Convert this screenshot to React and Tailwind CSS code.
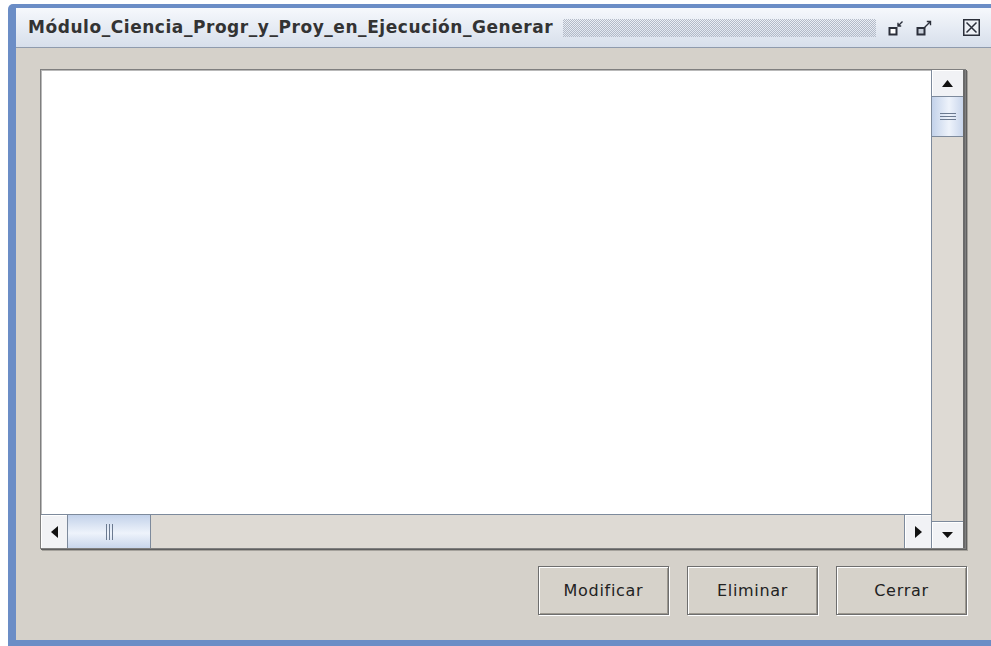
import React from "react";

const dialogFont = { fontFamily: '"DejaVu Sans", "Liberation Sans", sans-serif' };

function TriUp() {
  return (
    <svg width="11" height="7" viewBox="0 0 11 7"><polygon points="0,7 5.5,0 11,7" fill="#111" /></svg>
  );
}
function TriDown() {
  return (
    <svg width="11" height="6" viewBox="0 0 11 6"><polygon points="0,0 11,0 5.5,6" fill="#111" /></svg>
  );
}
function TriLeft() {
  return (
    <svg width="7" height="12" viewBox="0 0 7 12"><polygon points="7,0 7,12 0,6" fill="#111" /></svg>
  );
}
function TriRight() {
  return (
    <svg width="7" height="12" viewBox="0 0 7 12"><polygon points="0,0 7,6 0,12" fill="#111" /></svg>
  );
}

function IconifyIcon() {
  return (
    <svg width="16" height="16" viewBox="0 0 16 16">
      <rect x="1.5" y="8" width="7" height="6.5" fill="#fff" stroke="#2b2f3a" strokeWidth="2" />
      <path d="M14.5 1.5 L10 6 M10 2.8 V6 H13.2" stroke="#2b2f3a" strokeWidth="1.4" fill="none" />
    </svg>
  );
}
function MaximizeIcon() {
  return (
    <svg width="16" height="16" viewBox="0 0 16 16">
      <rect x="1.5" y="8" width="7" height="6.5" fill="#c8cfda" stroke="#2b2f3a" strokeWidth="2" />
      <path d="M8.5 7.5 L14.5 1.5 M10.8 1.5 H14.5 V5.2" stroke="#2b2f3a" strokeWidth="1.4" fill="none" />
    </svg>
  );
}
function CloseIcon() {
  return (
    <svg width="17" height="17" viewBox="0 0 17 17">
      <rect x="0.75" y="0.75" width="15.5" height="15.5" fill="#eef1f6" stroke="#2b2f3a" strokeWidth="1.5" />
      <path d="M3.5 3.5 L13.5 13.5 M13.5 3.5 L3.5 13.5" stroke="#2b2f3a" strokeWidth="1.5" />
    </svg>
  );
}

function ArrowButton({ children, className }) {
  return (
    <div
      className={
        "flex items-center justify-center bg-[#f1f2f5] border border-[#7d8a9c] shadow-[inset_1px_1px_0_#ffffff] " +
        className
      }
    >
      {children}
    </div>
  );
}

function PushButton({ label }) {
  return (
    <div className="w-[131px] h-[49px] flex items-center justify-center bg-[#d6d2ca] border border-[#6e6e6e] shadow-[inset_1px_1px_0_#ffffff,inset_-1px_-1px_0_#9c988f,1px_1px_0_#ffffff] text-[16px] tracking-[0.7px] text-[#222]">
      {label}
    </div>
  );
}

export default function App() {
  return (
    <div className="w-[991px] h-[646px] bg-white overflow-hidden" style={dialogFont}>
      <div className="ml-[8px] mt-[4px] w-[983px] h-[642px] bg-[#6b8dc6] rounded-tl-[5px] pl-[8px] pt-[4px] pb-[6px] flex flex-col">
        {/* title bar */}
        <div className="h-[40px] shrink-0 flex items-center bg-[linear-gradient(#f6f8fc,#e3e9f2_60%,#d7dfeb)] border-b border-[#8f9bad] pl-[12px] pr-[10px]">
          <span className="text-[17px] font-bold text-[#333] tracking-[0.55px] whitespace-nowrap">
            Módulo_Ciencia_Progr_y_Proy_en_Ejecución_Generar
          </span>
          <div className="flex-1 h-[18px] ml-[10px] mr-[12px] bg-[conic-gradient(#b3bac7_25%,transparent_0_50%,#b3bac7_0_75%,transparent_0)] bg-[length:2px_2px]" />
          <div className="flex items-center gap-[12px] pr-[1px]">
            <IconifyIcon />
            <MaximizeIcon />
            <div className="ml-[19px]">
              <CloseIcon />
            </div>
          </div>
        </div>

        {/* content */}
        <div className="flex-1 bg-[#d5d1ca] pl-[24px] pr-[24px] pt-[21px] flex flex-col">
          <div className="w-[926px] h-[480px] border border-[#7f7f7f] shadow-[1px_1px_0_#5f5f5f,2px_2px_0_#a5a29c] bg-[#d5d1ca] grid grid-cols-[890px_1fr] grid-rows-[444px_1fr]">
            <div className="bg-white border-l border-t border-[#b9b9b9]" />
            {/* vertical scrollbar */}
            <div className="row-span-2 flex flex-col bg-[#dedad4] border-l border-[#7d8a9c] border-r-2 border-r-[#6a6a6a]">
              <ArrowButton className="h-[27px] border-x-0 border-t-0">
                <TriUp />
              </ArrowButton>
              <div className="h-[40px] flex flex-col items-center justify-center gap-[2px] bg-[linear-gradient(90deg,#c3d2ea,#eef3fb_55%,#c9d6ec)] border-b border-[#7d8a9c]">
                <div className="w-[16px] h-[1px] bg-[#6b7a90]" />
                <div className="w-[16px] h-[1px] bg-[#6b7a90]" />
                <div className="w-[16px] h-[1px] bg-[#6b7a90]" />
              </div>
              <div className="flex-1" />
              <ArrowButton className="h-[27px] border-x-0 border-b-0">
                <TriDown />
              </ArrowButton>
            </div>
            {/* horizontal scrollbar */}
            <div className="flex bg-[#dedad4] border-t border-[#7d8a9c]">
              <ArrowButton className="w-[27px] border-y-0 border-l-0">
                <TriLeft />
              </ArrowButton>
              <div className="w-[83px] flex items-center justify-center gap-[2px] bg-[linear-gradient(#c3d2ea,#eef3fb_55%,#c9d6ec)] border-r border-[#7d8a9c]">
                <div className="w-[1px] h-[16px] bg-[#6b7a90]" />
                <div className="w-[1px] h-[16px] bg-[#6b7a90]" />
                <div className="w-[1px] h-[16px] bg-[#6b7a90]" />
              </div>
              <div className="flex-1" />
              <ArrowButton className="w-[27px] border-y-0 border-r-0">
                <TriRight />
              </ArrowButton>
            </div>
          </div>

          <div className="mt-[17px] flex justify-end gap-[18px]">
            <PushButton label="Modificar" />
            <PushButton label="Eliminar" />
            <PushButton label="Cerrar" />
          </div>
        </div>
      </div>
    </div>
  );
}
